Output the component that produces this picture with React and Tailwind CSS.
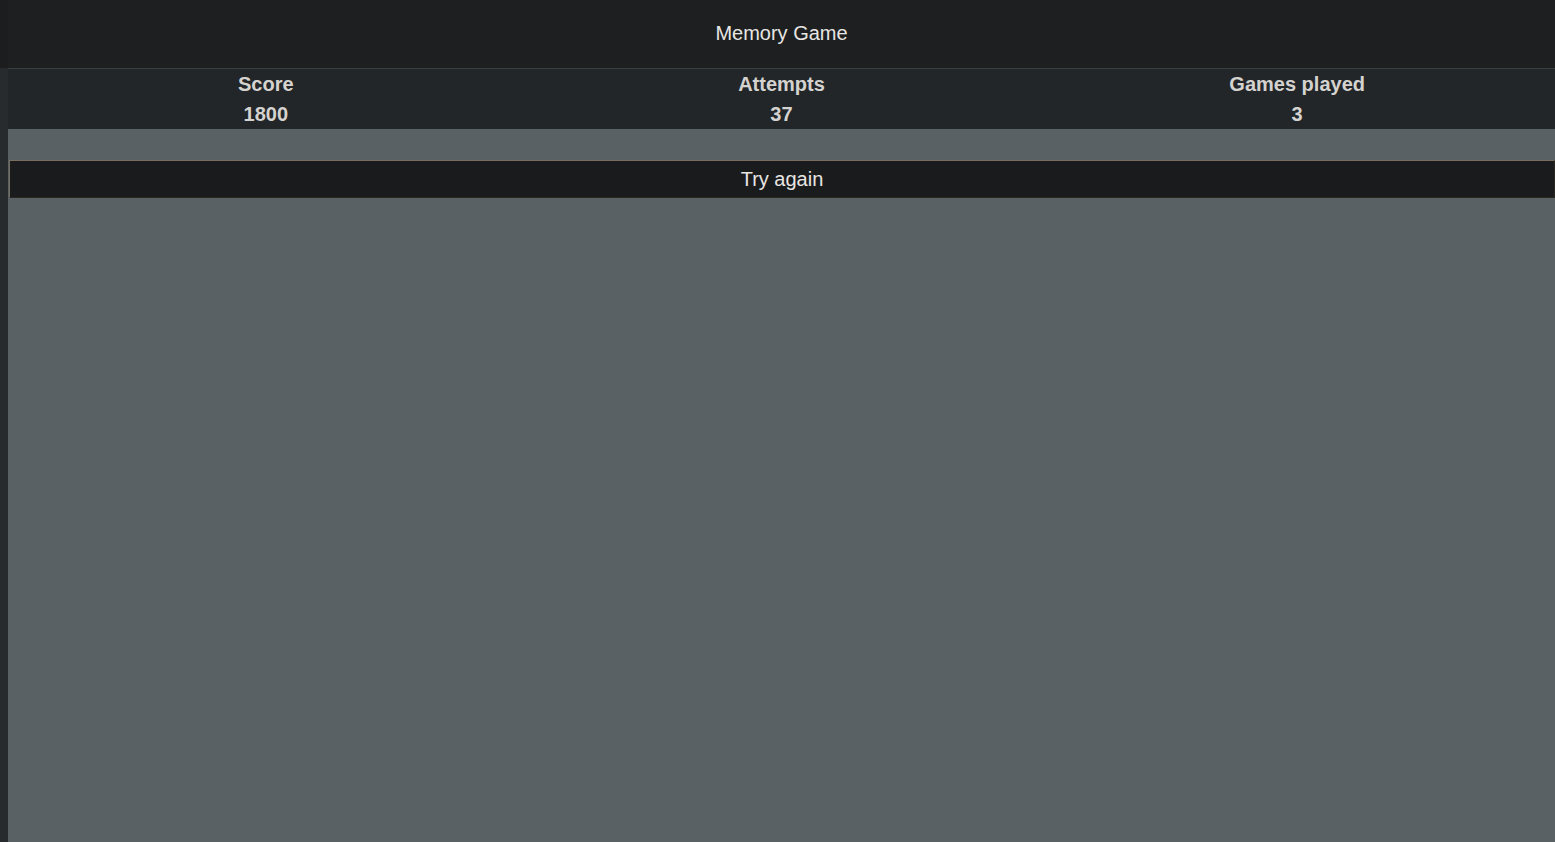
import React, { useState } from 'react';

const stats = [
  { label: 'Score', value: 1800 },
  { label: 'Attempts', value: 37 },
  { label: 'Games played', value: 3 },
];

const App = () => {
  const [games, setGames] = useState(3);

  return (
    <div className="flex min-h-[842px] bg-[#272b2d] font-['Liberation_Sans',Arial,sans-serif]">
      {/* left strip */}
      <div className="w-[8px] shrink-0 flex flex-col">
        <div className="h-[68px] bg-[#1b1d1f]" />
      </div>

      <div className="flex-1 flex flex-col bg-[#5a6165]">
        <header className="h-[69px] flex items-center justify-center bg-[#1d1f21] border-b border-[#3a4042] text-[20px] text-[#e8e6e3] pb-[3px]">
          Memory Game
        </header>

        <div className="grid grid-cols-3 h-[60px] bg-[#222629] text-[20px] leading-[30px] font-bold text-[#d5d3cf]">
          {stats.map((s) => (
            <div key={s.label} className="flex flex-col items-center">
              <span>{s.label}</span>
              <span>{s.label === 'Games played' ? games : s.value}</span>
            </div>
          ))}
        </div>

        <div className="h-[31px]" />

        <button
          onClick={() => setGames(games + 1)}
          className="ml-px h-[38px] w-[calc(100%-1px)] bg-[#1a1b1d] border-t border-l border-[#7a6e61] border-b-[#2b2721] border-r-[#2b2721] border-b border-r text-[20px] text-[#e8e6e3] flex items-center justify-center"
        >
          Try again
        </button>
      </div>
    </div>
  );
};

export default App;
